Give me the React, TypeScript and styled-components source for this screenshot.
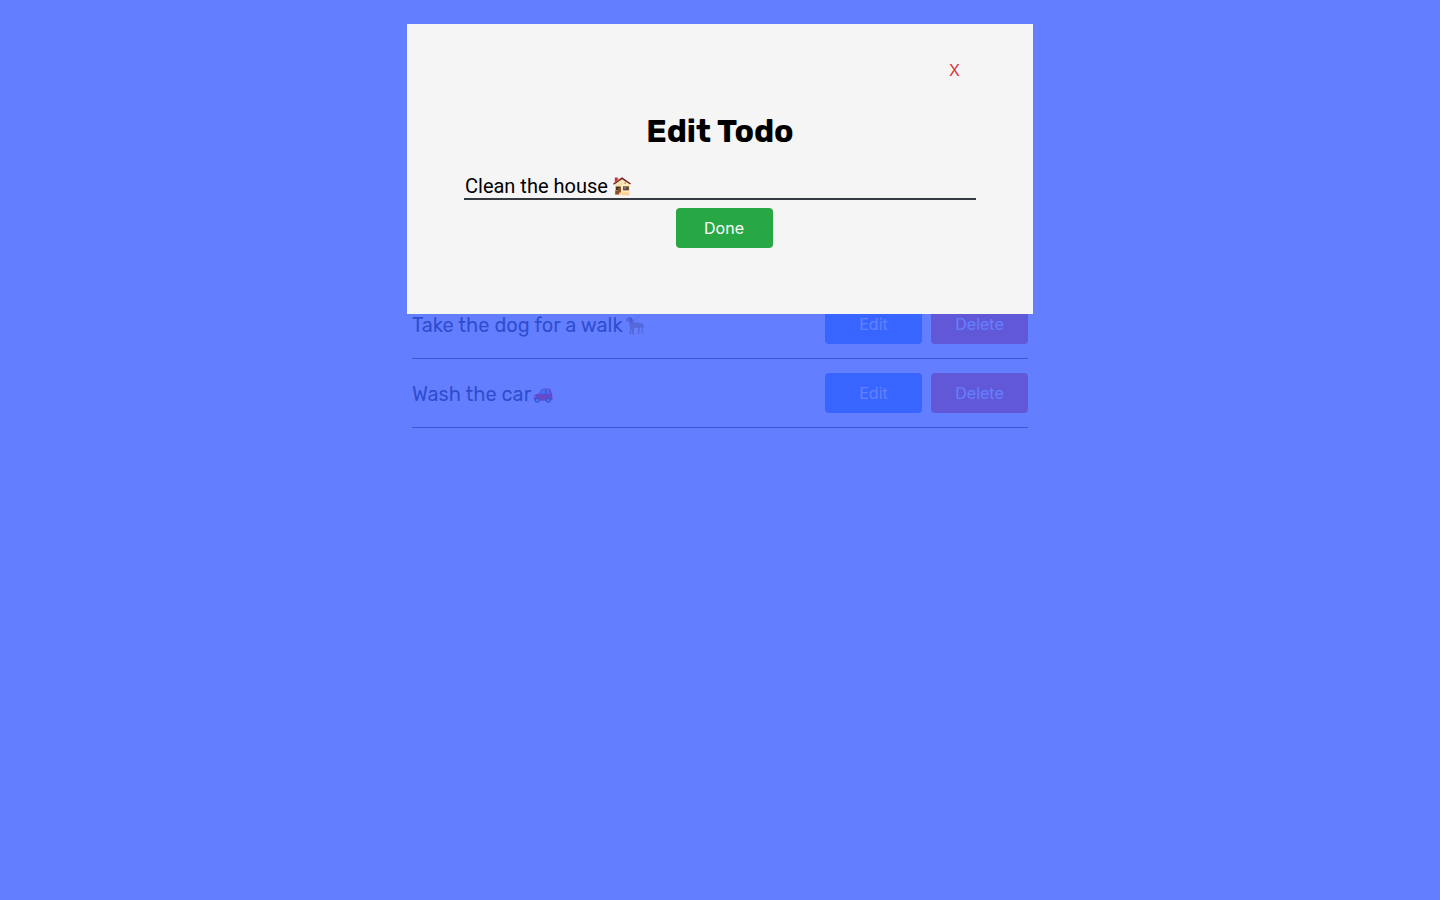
import React, { useState } from "react";
import styled, { createGlobalStyle } from "styled-components";

const GlobalStyle = createGlobalStyle`
  * { box-sizing: border-box; }
  body {
    margin: 0;
    background: #ffffff;
    color: #000000;
    font-family: Rubik, Roboto, sans-serif;
  }
`;

const Page = styled.main`
  max-width: 616px;
  margin: 0 auto;
  padding-top: 290px;
`;

const TodoList = styled.ul`
  margin: 0;
  padding: 0;
  list-style: none;
`;

const TodoItem = styled.li`
  display: flex;
  align-items: center;
  gap: 9px;
  padding: 14px 0;
  border-bottom: 1px solid #343a40;
`;

const TodoText = styled.span`
  flex: 1;
  display: flex;
  align-items: center;
  gap: 2px;
  padding-top: 2px;
  font-size: 20px;
  line-height: 24px;
`;

const Button = styled.button<{ $color: string }>`
  width: 97px;
  height: 40px;
  padding: 0;
  border: 0;
  border-radius: 4px;
  background: ${(p) => p.$color};
  color: #ffffff;
  font-family: Inter, sans-serif;
  font-size: 16px;
  line-height: 20px;
  cursor: pointer;
`;

const Overlay = styled.div`
  position: fixed;
  inset: 0;
  padding: 24px;
  background: rgba(60, 95, 255, 0.8);
`;

const Modal = styled.section`
  display: flex;
  flex-direction: column;
  max-width: 626px;
  min-height: 290px;
  margin: 0 auto;
  padding: 32px 57px;
  background: #f5f5f5;
`;

const CloseButton = styled.button`
  align-self: flex-end;
  margin-right: 8px;
  padding: 4px 8px;
  border: 0;
  background: transparent;
  color: #dc3545;
  font-family: Inter, sans-serif;
  font-size: 16px;
  line-height: 20px;
  cursor: pointer;
`;

const Title = styled.h1`
  margin: 28px 0 24px;
  font-size: 32px;
  font-weight: 700;
  line-height: 38px;
  text-align: center;
`;

const Form = styled.form`
  display: flex;
  flex-direction: column;
  align-items: center;
`;

const Field = styled.div`
  position: relative;
  width: 100%;
`;

const FieldEmoji = styled.span`
  position: absolute;
  left: 148px;
  top: 2px;
  display: flex;
  pointer-events: none;
`;

const TextInput = styled.input`
  display: block;
  width: 100%;
  height: 26px;
  padding: 1px;
  border: 0;
  border-bottom: 2px solid #343a40;
  border-radius: 0;
  outline: 0;
  background: transparent;
  color: #000000;
  font-family: Roboto, sans-serif;
  font-size: 20px;
`;

const DoneRow = styled.div`
  margin: 8px 0 0 8px;
`;

const HouseIcon = () => (
  <svg width="20" height="20" viewBox="0 0 20 20" aria-hidden="true">
    <path d="M3 8 10 2.5 17.4 7v12.3L3 19z" fill="#f8dfac" />
    <path d="M10 3 17.4 8v11.3l-7.2-.2z" fill="#ffe9bd" />
    <path d="M2.8 1.5h3v4.2l-3 2z" fill="#b83c35" />
    <path d="M1 7.8 10 1.2l9 6.3-.8 1L10 3.2 1.8 8.8z" fill="#6c2325" />
    <path d="M3 6.2 9.5 1.8" stroke="#d95a4f" strokeWidth="1" />
    <path d="M3.8 10.5h4.8v3.8H3.8z" fill="#4b3424" />
    <path d="M6.2 12h2.7v4.4H6.2zM3.2 14.5h4v4H3.2z" fill="#8a4c20" />
    <path d="M11 10.2h6v4.2h-6z" fill="#8b5529" />
    <path d="M11.7 11.8h4.5v1.6h-4.5z" fill="#29485d" />
    <path d="m12 12.3 2-.5" stroke="#9cc3d4" strokeWidth=".8" />
    <path d="M10.2 16.4h7v2.9h-7z" fill="#fbd193" />
    <path d="M12.5 6.2h1.4v1.5h-1.4z" fill="#b7864d" />
  </svg>
);

const DogIcon = () => (
  <svg width="20" height="20" viewBox="0 0 20 20" aria-hidden="true">
    <path d="m7 7.5 8-7.3" stroke="#8b5a70" strokeWidth=".6" />
    <path
      d="M.8 4.2 3.2 2l3 .3 1.8 2.5.3 2.4 7.2.6 2 1.3.7 3.2-.4 5.7.8.8h-2.2l.4-5.2-1.5-2.2-.2 3-1 2.3.6 2h-2l.1-3.4.6-2.4-4.3-.5-.2 5.2.7 1.8H7.4l-.5-6-.8 4.8.5 1.2H4.4l.5-7.4-.8-3-.3-2.4-2.2.2z"
      fill="#c08a50"
    />
    <path d="m5 2.8 1.8.2 1 3.2-1.5.6-1.4-1.8z" fill="#594044" />
    <path d="m16.5 8.5 1.7 1 .8 3.6-.9-.8-.8-2.2z" fill="#73575b" />
    <path d="M5 7.3 8.2 7" stroke="#a84661" strokeWidth="1" />
  </svg>
);

const CarIcon = () => (
  <svg width="20" height="20" viewBox="0 0 20 20" aria-hidden="true">
    <path
      d="M.5 14.8 1 11.5l2-1.2 3-.8 2.4-4 2.2-.9h5l2 .9 1.6 4.8.3 5.2-1.5 1.2H2z"
      fill="#ff0000"
    />
    <path d="m6.8 9.8 2.6-4.2 3-.4.2 4.5zM13.5 5.3h2.2l1.4 4.2-3.4.2z" fill="#48bdff" />
    <path d="M12.8 5v11M3 11.2l14.5-.8" stroke="#c00010" strokeWidth=".6" />
    <circle cx="4.2" cy="16.2" r="2.5" fill="#103555" />
    <circle cx="15.2" cy="16.2" r="2.5" fill="#103555" />
    <circle cx="4.2" cy="16.2" r="1.2" fill="#b8d6e8" />
    <circle cx="15.2" cy="16.2" r="1.2" fill="#b8d6e8" />
    <path d="M1 12.3h2v1H1z" fill="#ffc0a0" />
  </svg>
);

const todos = [
  { text: "Take the dog for a walk", Icon: DogIcon },
  { text: "Wash the car", Icon: CarIcon },
];

export default function App() {
  const [value, setValue] = useState("Clean the house");

  return (
    <>
      <GlobalStyle />
      <Page>
        <TodoList>
          {todos.map(({ text, Icon }) => (
            <TodoItem key={text}>
              <TodoText>
                {text}
                <Icon />
              </TodoText>
              <Button type="button" $color="#287eff">Edit</Button>
              <Button type="button" $color="#f53d3c">Delete</Button>
            </TodoItem>
          ))}
        </TodoList>
      </Page>
      <Overlay>
        <Modal role="dialog" aria-modal="true" aria-labelledby="edit-title">
          <CloseButton type="button">X</CloseButton>
          <Title id="edit-title">Edit Todo</Title>
          <Form onSubmit={(e) => e.preventDefault()}>
            <Field>
              <TextInput
                type="text"
                aria-labelledby="edit-title"
                value={value}
                onChange={(e) => setValue(e.target.value)}
              />
              <FieldEmoji>
                <HouseIcon />
              </FieldEmoji>
            </Field>
            <DoneRow>
              <Button type="submit" $color="#28a745">Done</Button>
            </DoneRow>
          </Form>
        </Modal>
      </Overlay>
    </>
  );
}
